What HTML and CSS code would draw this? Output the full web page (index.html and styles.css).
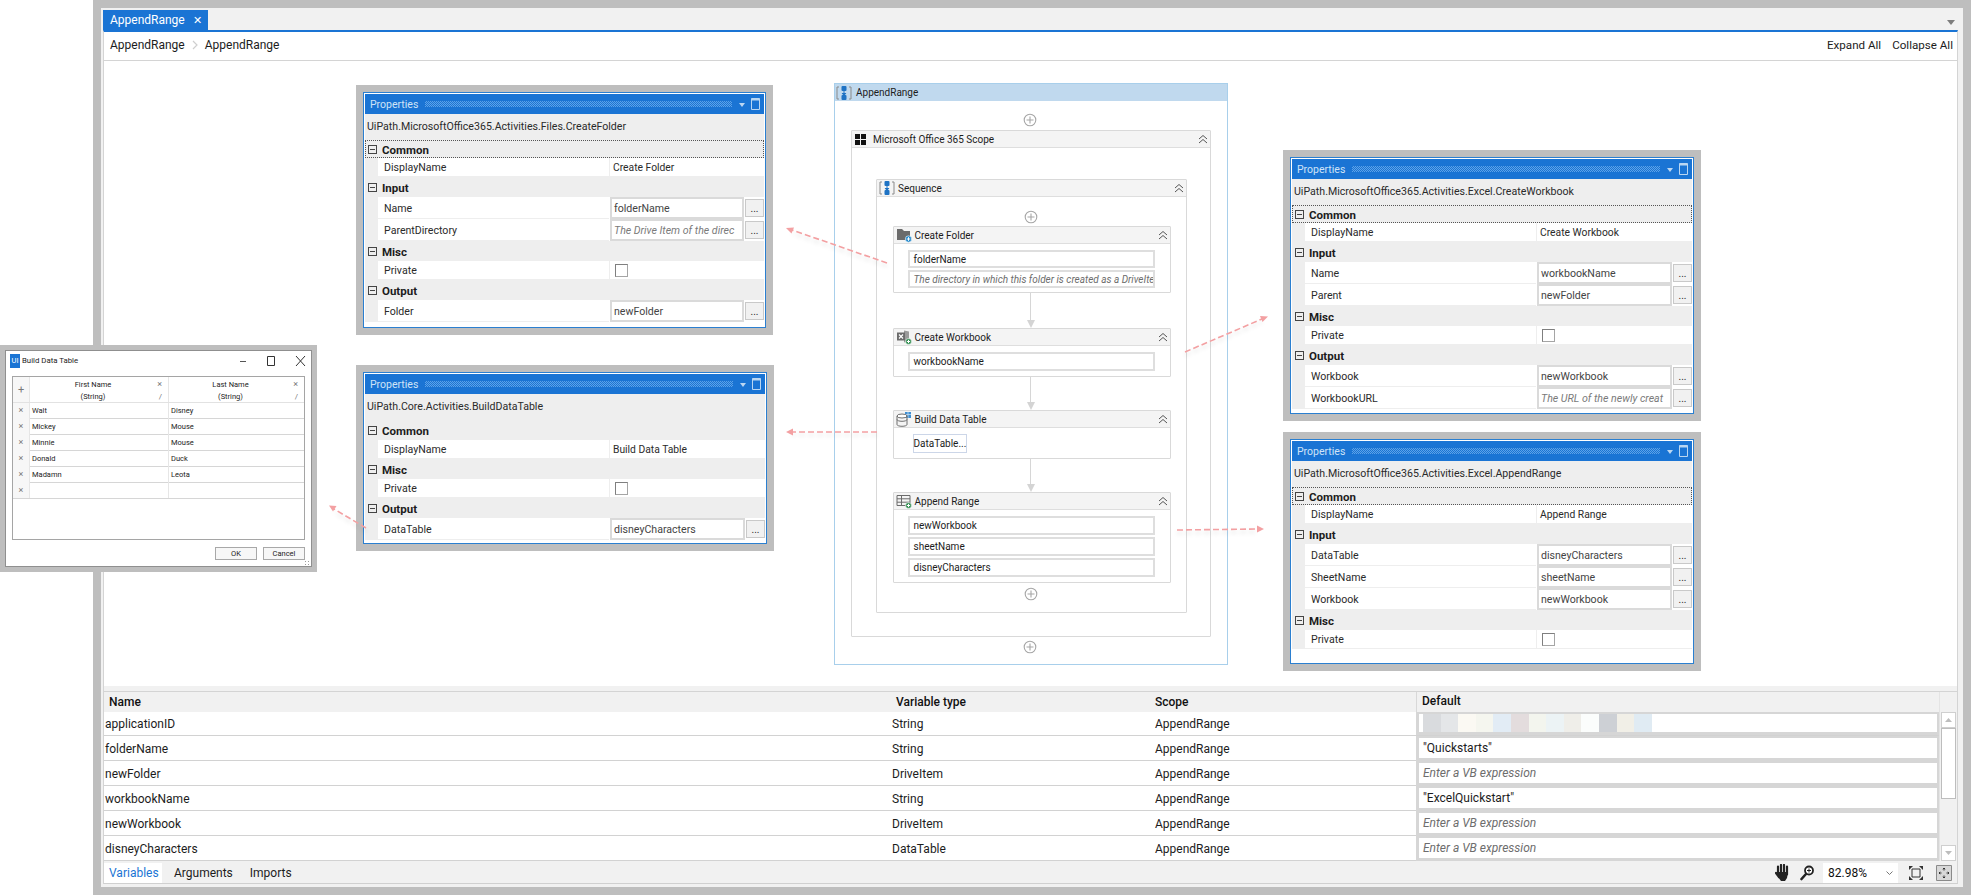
FILE: index.html
```html
<!DOCTYPE html>
<html lang="en">
<head>
<meta charset="utf-8">
<title>AppendRange</title>
<link rel="stylesheet" href="styles.css">
</head>
<body>
<svg class="defs" width="0" height="0" aria-hidden="true">
  <symbol id="i-seq" viewBox="0 0 16 16">
    <path d="M3 2H1v12h2M13 2h2v12h-2" fill="none" stroke="#8a8a8a"/>
    <rect x="5.500" y="1" width="5" height="5" rx="1" fill="#1f73c4"/>
    <rect x="5.500" y="10" width="5" height="5" rx="1" fill="#1f73c4"/>
    <path d="M8 5v5M6 8l2 2.400L10 8" fill="#1f73c4" stroke="#1f73c4"/>
  </symbol>
  <symbol id="i-office" viewBox="0 0 11 11">
    <path d="M0 0h5v5H0zM6 0h5v5H6zM0 6h5v5H0zM6 6h5v5H6z" fill="#111"/>
  </symbol>
  <symbol id="i-folder" viewBox="0 0 16 16">
    <path d="M1 2h5l2 2h6v9H1z" fill="#6b6b6b"/>
    <circle cx="12.500" cy="12" r="3.200" fill="#1f86c9" stroke="#fff" stroke-width=".6"/>
    <path d="M12.500 10.200v3.600M10.700 12h3.600" stroke="#fff"/>
  </symbol>
  <symbol id="i-excel" viewBox="0 0 16 16">
    <path d="M8 1.500l5 1v9l-5 2z" fill="#9a9a9a"/>
    <path d="M1 3.500h8v8H1z" fill="#6b6b6b"/>
    <path d="M3 5.500l4 4M7 5.500l-4 4" stroke="#fff" stroke-width="1.200"/>
    <circle cx="12.500" cy="12.500" r="3" fill="#2e8b4e" stroke="#fff" stroke-width=".6"/>
    <path d="M12.500 10.800v3.400M10.800 12.500h3.400" stroke="#fff"/>
  </symbol>
  <symbol id="i-db" viewBox="0 0 16 16">
    <path d="M9 1h6v6H9z" fill="#3f8fd2"/>
    <path d="M12 1v6M9 3.500h6" stroke="#cfe5f6" stroke-width=".7"/>
    <ellipse cx="6" cy="5" rx="5" ry="2" fill="#fff" stroke="#6e6e6e"/>
    <path d="M1 5v8.500c0 1 2.200 1.800 5 1.800s5-.8 5-1.800V5M1 8.500c0 1 2.200 1.800 5 1.800s5-.8 5-1.800" fill="none" stroke="#6e6e6e"/>
  </symbol>
  <symbol id="i-range" viewBox="0 0 16 16">
    <path d="M1 2.500h13v10H1zM1 5.800h13M1 9.200h13M5.500 2.500v10" fill="none" stroke="#6b6b6b"/>
    <circle cx="12.500" cy="12.500" r="3" fill="#2e8b4e" stroke="#fff" stroke-width=".6"/>
    <path d="M12.500 10.800v3.400M10.800 12.500h3.400" stroke="#fff"/>
  </symbol>
  <symbol id="i-chev" viewBox="0 0 10 10">
    <path d="M1 5l4-3.500L9 5M1 9l4-3.500L9 9" fill="none" stroke="#555" stroke-width="1"/>
  </symbol>
  <symbol id="i-plus" viewBox="0 0 14 14">
    <circle cx="7" cy="7" r="5.800" fill="#fff" stroke="#a6a6a6" stroke-width="1.100"/>
    <path d="M7 3.500v7M3.500 7h7" stroke="#a6a6a6" stroke-width="1.100"/>
  </symbol>
  <symbol id="i-win" viewBox="0 0 9 12">
    <path d="M.5.500h8v11h-8z" fill="none" stroke="#b9d6f2"/>
    <path d="M.5 1.500h8" stroke="#b9d6f2" stroke-width="2"/>
  </symbol>
</svg>

<div class="page">
  <div class="frame">
    <div class="app">
      <div class="tabstrip">
        <div class="tab"><span>AppendRange</span><span class="tab-x">✕</span></div>
        <span class="strip-caret"></span>
      </div>
      <div class="main">
        <div class="crumbs">
          <span>AppendRange</span>
          <svg class="crumb-sep" width="6" height="10" viewBox="0 0 6 10"><path d="M1 1l4 4-4 4" fill="none" stroke="#cfcfcf" stroke-width="1.200"/></svg>
          <span>AppendRange</span>
          <span class="crumb-actions"><span>Expand All</span><span>Collapse All</span></span>
        </div>
        <div class="canvas"></div>
        <div class="split"></div>
        <div class="vars">
          <div class="vars-table">
            <div class="vrow vhead"><span class="vname">Name</span><span>Variable type</span><span>Scope</span><span class="vdefault-head">Default</span></div>
            <div class="vrow vfirst"><span>applicationID</span><span>String</span><span>AppendRange</span>
              <div class="vcell"><div class="vinput"><div class="redact"><i></i><i></i><i></i><i></i><i></i><i></i><i></i><i></i><i></i><i></i><i></i><i></i><i></i></div></div></div></div>
            <div class="vrow"><span>folderName</span><span>String</span><span>AppendRange</span>
              <div class="vcell"><div class="vinput">"Quickstarts"</div></div></div>
            <div class="vrow"><span>newFolder</span><span>DriveItem</span><span>AppendRange</span>
              <div class="vcell"><div class="vinput ph">Enter a VB expression</div></div></div>
            <div class="vrow"><span>workbookName</span><span>String</span><span>AppendRange</span>
              <div class="vcell"><div class="vinput">"ExcelQuickstart"</div></div></div>
            <div class="vrow"><span>newWorkbook</span><span>DriveItem</span><span>AppendRange</span>
              <div class="vcell"><div class="vinput ph">Enter a VB expression</div></div></div>
            <div class="vrow"><span>disneyCharacters</span><span>DataTable</span><span>AppendRange</span>
              <div class="vcell"><div class="vinput ph">Enter a VB expression</div></div></div>
          </div>
          <div class="vscroll">
            <div class="sb-btn"><svg width="7" height="4" viewBox="0 0 7 4"><path d="M0 4l3.500-4L7 4z" fill="#bdbdbd"/></svg></div>
            <div class="sb-thumb"></div>
            <div class="sb-track"></div>
            <div class="sb-btn"><svg width="7" height="4" viewBox="0 0 7 4"><path d="M0 0l3.500 4L7 0z" fill="#bdbdbd"/></svg></div>
          </div>
        </div>
        <div class="bottombar">
          <span class="btab active">Variables</span><span class="btab">Arguments</span><span class="btab">Imports</span>
          <div class="zoomtools">
            <svg class="z-hand" width="16" height="18" viewBox="0 0 16 18"><path d="M3 2.500v7M6 1v8M9 1v8M12 2.500v8M1 9l3 4" fill="none" stroke="#222" stroke-width="2.200" stroke-linecap="round"/><path d="M3 8h10l-1 6-2 3H6l-3-4z" fill="#222"/></svg>
            <svg class="z-glass" width="14" height="16" viewBox="0 0 14 16"><circle cx="9" cy="5.500" r="4" fill="#fff" stroke="#222" stroke-width="1.800"/><path d="M6 9l-4.500 5" stroke="#222" stroke-width="2.600" stroke-linecap="round"/><path d="M9 3.500v4M7 5.500h4" stroke="#222"/></svg>
            <div class="z-box"><span>82.98%</span><svg width="7" height="4" viewBox="0 0 7 4"><path d="M.5.500l3 3 3-3" fill="none" stroke="#777"/></svg></div>
            <svg class="z-fit" width="14" height="14" viewBox="0 0 14 14"><path d="M3 3h8v8H3z" fill="none" stroke="#333"/><path d="M0 0h4L0 4zM14 0h-4l4 4zM0 14h4l-4-4zM14 14h-4l4-4z" fill="#333"/></svg>
            <svg class="z-reset" width="16" height="16" viewBox="0 0 16 16"><path d="M.5.500h15v15H.5z" fill="#d8d8d8" stroke="#8a8a8a"/><path d="M8 3v2.500M6.800 4.200L8 3l1.200 1.200M8 13v-2.500M6.800 11.800L8 13l1.200-1.200M3 8h2.500M4.200 6.800L3 8l1.200 1.200M13 8h-2.500M11.800 6.800L13 8l-1.200 1.200" fill="none" stroke="#333"/></svg>
          </div>
        </div>
      </div>
    </div>
  </div>

  <div class="diagram">
    <div class="root-head"><svg class="ico16"><use href="#i-seq"/></svg><span>AppendRange</span></div>
    <div class="root-body">
      <svg class="plus plus-root"><use href="#i-plus"/></svg>
      <div class="box scope">
        <div class="head"><svg class="ico-office"><use href="#i-office"/></svg><span>Microsoft Office 365 Scope</span><svg class="chev"><use href="#i-chev"/></svg></div>
        <div class="scope-body">
          <div class="box seq">
            <div class="head"><svg class="ico16"><use href="#i-seq"/></svg><span>Sequence</span><svg class="chev"><use href="#i-chev"/></svg></div>
            <div class="seq-body">
              <svg class="plus plus-seq"><use href="#i-plus"/></svg>
              <div class="box card">
                <div class="head"><svg class="ico16"><use href="#i-folder"/></svg><span>Create Folder</span><svg class="chev"><use href="#i-chev"/></svg></div>
                <div class="card-body tight"><div class="finput short">folderName</div><div class="finput short ph">The directory in which this folder is created as a DriveIte</div></div>
              </div>
              <div class="conn conn-a"></div>
              <div class="box card">
                <div class="head"><svg class="ico16"><use href="#i-excel"/></svg><span>Create Workbook</span><svg class="chev"><use href="#i-chev"/></svg></div>
                <div class="card-body"><div class="finput">workbookName</div></div>
              </div>
              <div class="conn"></div>
              <div class="box card">
                <div class="head"><svg class="ico16"><use href="#i-db"/></svg><span>Build Data Table</span><svg class="chev"><use href="#i-chev"/></svg></div>
                <div class="card-body"><div class="dt-btn">DataTable...</div></div>
              </div>
              <div class="conn"></div>
              <div class="box card">
                <div class="head"><svg class="ico16"><use href="#i-range"/></svg><span>Append Range</span><svg class="chev"><use href="#i-chev"/></svg></div>
                <div class="card-body"><div class="finput">newWorkbook</div><div class="finput">sheetName</div><div class="finput">disneyCharacters</div></div>
              </div>
              <svg class="plus plus-end"><use href="#i-plus"/></svg>
            </div>
          </div>
        </div>
      </div>
      <svg class="plus plus-tail"><use href="#i-plus"/></svg>
    </div>
  </div>

  <section class="panel panel-a">
    <div class="p-head"><span>Properties</span><i class="grip"></i><i class="p-caret"></i><svg class="p-win"><use href="#i-win"/></svg></div>
    <div class="p-class">UiPath.MicrosoftOffice365.Activities.Files.CreateFolder</div>
    <div class="cat first focus"><i class="minus"></i>Common</div>
    <div class="prop plain"><span class="lab">DisplayName</span><span class="val">Create Folder</span></div>
    <div class="cat"><i class="minus"></i>Input</div>
    <div class="prop"><span class="lab">Name</span><div class="val-edit"><span class="tb">folderName</span><span class="dots">...</span></div></div>
    <div class="prop"><span class="lab">ParentDirectory</span><div class="val-edit"><span class="tb ph">The Drive Item of the direc</span><span class="dots">...</span></div></div>
    <div class="cat"><i class="minus"></i>Misc</div>
    <div class="prop plain"><span class="lab">Private</span><div class="val-check"><i class="check"></i></div></div>
    <div class="cat"><i class="minus"></i>Output</div>
    <div class="prop"><span class="lab">Folder</span><div class="val-edit"><span class="tb">newFolder</span><span class="dots">...</span></div></div>
  </section>

  <section class="panel panel-b">
    <div class="p-head"><span>Properties</span><i class="grip"></i><i class="p-caret"></i><svg class="p-win"><use href="#i-win"/></svg></div>
    <div class="p-class">UiPath.Core.Activities.BuildDataTable</div>
    <div class="cat"><i class="minus"></i>Common</div>
    <div class="prop plain"><span class="lab">DisplayName</span><span class="val">Build Data Table</span></div>
    <div class="cat"><i class="minus"></i>Misc</div>
    <div class="prop plain"><span class="lab">Private</span><div class="val-check"><i class="check"></i></div></div>
    <div class="cat"><i class="minus"></i>Output</div>
    <div class="prop"><span class="lab">DataTable</span><div class="val-edit"><span class="tb">disneyCharacters</span><span class="dots">...</span></div></div>
  </section>

  <section class="panel panel-c">
    <div class="p-head"><span>Properties</span><i class="grip"></i><i class="p-caret"></i><svg class="p-win"><use href="#i-win"/></svg></div>
    <div class="p-class">UiPath.MicrosoftOffice365.Activities.Excel.CreateWorkbook</div>
    <div class="cat first focus"><i class="minus"></i>Common</div>
    <div class="prop plain"><span class="lab">DisplayName</span><span class="val">Create Workbook</span></div>
    <div class="cat"><i class="minus"></i>Input</div>
    <div class="prop"><span class="lab">Name</span><div class="val-edit"><span class="tb">workbookName</span><span class="dots">...</span></div></div>
    <div class="prop"><span class="lab">Parent</span><div class="val-edit"><span class="tb">newFolder</span><span class="dots">...</span></div></div>
    <div class="cat"><i class="minus"></i>Misc</div>
    <div class="prop plain"><span class="lab">Private</span><div class="val-check"><i class="check"></i></div></div>
    <div class="cat"><i class="minus"></i>Output</div>
    <div class="prop"><span class="lab">Workbook</span><div class="val-edit"><span class="tb">newWorkbook</span><span class="dots">...</span></div></div>
    <div class="prop"><span class="lab">WorkbookURL</span><div class="val-edit"><span class="tb ph">The URL of the newly creat</span><span class="dots">...</span></div></div>
  </section>

  <section class="panel panel-d">
    <div class="p-head"><span>Properties</span><i class="grip"></i><i class="p-caret"></i><svg class="p-win"><use href="#i-win"/></svg></div>
    <div class="p-class">UiPath.MicrosoftOffice365.Activities.Excel.AppendRange</div>
    <div class="cat first focus"><i class="minus"></i>Common</div>
    <div class="prop plain"><span class="lab">DisplayName</span><span class="val">Append Range</span></div>
    <div class="cat"><i class="minus"></i>Input</div>
    <div class="prop"><span class="lab">DataTable</span><div class="val-edit"><span class="tb">disneyCharacters</span><span class="dots">...</span></div></div>
    <div class="prop"><span class="lab">SheetName</span><div class="val-edit"><span class="tb">sheetName</span><span class="dots">...</span></div></div>
    <div class="prop"><span class="lab">Workbook</span><div class="val-edit"><span class="tb">newWorkbook</span><span class="dots">...</span></div></div>
    <div class="cat"><i class="minus"></i>Misc</div>
    <div class="prop plain"><span class="lab">Private</span><div class="val-check"><i class="check"></i></div></div>
  </section>

  <section class="dialog">
    <div class="d-title">
      <span class="d-logo">UI</span><span class="d-name">Build Data Table</span>
      <svg class="d-btns" width="70" height="12" viewBox="0 0 70 12"><path d="M2 6.500h6" stroke="#555"/><path d="M29.500 1.500h7v9h-7z" fill="none" stroke="#333"/><path d="M58 1l9 10M67 1l-9 10" stroke="#333"/></svg>
    </div>
    <div class="d-grid">
      <div class="d-row d-headrow">
        <span class="d-add">+</span>
        <div class="d-col"><span>First Name</span><span>(String)</span><b class="d-x">×</b><b class="d-pen">/</b></div>
        <div class="d-col"><span>Last Name</span><span>(String)</span><b class="d-x">×</b><b class="d-pen">/</b></div>
      </div>
      <div class="d-row"><span class="d-del">×</span><span class="d-c">Walt</span><span class="d-c">Disney</span></div>
      <div class="d-row"><span class="d-del">×</span><span class="d-c">Mickey</span><span class="d-c">Mouse</span></div>
      <div class="d-row"><span class="d-del">×</span><span class="d-c">Minnie</span><span class="d-c">Mouse</span></div>
      <div class="d-row"><span class="d-del">×</span><span class="d-c">Donald</span><span class="d-c">Duck</span></div>
      <div class="d-row"><span class="d-del">×</span><span class="d-c">Madamn</span><span class="d-c">Leota</span></div>
      <div class="d-row"><span class="d-del">×</span><span class="d-c"></span><span class="d-c"></span></div>
    </div>
    <div class="d-actions"><span class="d-btn">OK</span><span class="d-btn">Cancel</span></div>
  </section>

  <svg class="arrows" width="1971" height="895" viewBox="0 0 1971 895">
    <g class="arrow-lines">
      <path d="M887 263L792 230"/>
      <path d="M1185 352L1262 319"/>
      <path d="M877 432H792"/>
      <path d="M1177 530L1258 529"/>
      <path d="M366 528L334 509"/>
    </g>
    <g class="arrow-heads">
      <path d="M786 228l8-.5-2.500 6z"/>
      <path d="M1268 316.500l-8-.5 2.500 6z"/>
      <path d="M786 432l7-3.500v7z"/>
      <path d="M1264 529l-7-3.500v7z"/>
      <path d="M329 505.500l7.500.5-3.500 5.500z"/>
    </g>
  </svg>
</div>
</body>
</html>
```

FILE: styles.css
```css
* { box-sizing: border-box; }
html, body { margin: 0; padding: 0; background: #fff; }
body { font-family: Roboto, "Noto Sans", "Liberation Sans", sans-serif; font-size: 12px; color: #1c1c1c; overflow: hidden; }
.defs { position: absolute; }
i, b { font-style: normal; font-weight: normal; }

.page { position: relative; width: 1971px; height: 895px; overflow: hidden; }
.frame { margin-left: 93px; height: 895px; background: #bebebe; padding: 8px; }
.app { height: 879px; background: #f1f1f1; padding: 0 5px 3px 2px; display: flex; flex-direction: column; }

.tabstrip { height: 22px; flex: none; display: flex; align-items: flex-end; justify-content: space-between; }
.tab { width: 105px; height: 20px; background: #1a74d4; color: #fff; display: flex; align-items: center; justify-content: space-between; padding: 0 6px 0 7px; font-size: 12px; }
.tab-x { font-size: 11px; }
.strip-caret { width: 0; height: 0; border-left: 4px solid transparent; border-right: 4px solid transparent; border-top: 5px solid #7d7d7d; margin: 0 3px 5px 0; }

.main { flex: 1; min-height: 0; display: flex; flex-direction: column; border-top: 2px solid #1a74d4; border-left: 1px solid #d4d4d4; border-right: 1px solid #d4d4d4; border-bottom: 1px solid #d0d0d0; background: #fff; }
.crumbs { height: 29px; flex: none; display: flex; align-items: center; gap: 7px; padding: 0 4px 3px 6px; border-bottom: 1px solid #d4d4d4; }
.crumb-sep { margin: 0; }
.crumb-actions { margin-left: auto; display: flex; gap: 11px; font-size: 11.600px; }
.canvas { flex: 1; min-height: 0; background: #fff; }
.split { height: 5px; flex: none; background: #f1f1f1; }

.vars { flex: none; display: flex; height: 170px; border-top: 1px solid #d4d4d4; }
.vars-table { flex: 1; min-width: 0; }
.vrow { display: grid; grid-template-columns: 787px 263px 261px 1fr; height: 25px; align-items: center; border-bottom: 1px solid #d2d2d2; padding-left: 1px; }
.vfirst { height: 24px; }
.vhead { grid-template-columns: 791px 259px 261px 1fr; height: 20px; background: #f1f1f1; border-bottom: 0; font-weight: 500; color: #111; margin-right: -18px; padding-right: 18px; padding-bottom: 1px; }
.vname { padding-left: 4px; }
.vdefault-head { padding-left: 5px; border-left: 1px solid #d8d8d8; height: 20px; line-height: 19px; }
.vcell { align-self: stretch; background: #d6d6d6; padding: 2px 2px 3px 3px; }
.vinput { height: 100%; background: #fff; padding-left: 4px; line-height: 20px; }
.vinput.ph { font-style: italic; color: #6d6d6d; }
.redact { display: flex; width: 229px; height: 18px; }
.redact i { flex: 1; }
.redact i:nth-child(1) { background: #d9dbde; }
.redact i:nth-child(2) { background: #e4e6e8; }
.redact i:nth-child(3) { background: #fbf9f3; }
.redact i:nth-child(4) { background: #f5f6ef; }
.redact i:nth-child(5) { background: #e2ecf5; }
.redact i:nth-child(6) { background: #e3dcdd; }
.redact i:nth-child(7) { background: #f3f5ee; }
.redact i:nth-child(8) { background: #ecf3f5; }
.redact i:nth-child(9) { background: #efeee9; }
.redact i:nth-child(10) { background: #fbfdfc; }
.redact i:nth-child(11) { background: #cdd0d5; }
.redact i:nth-child(12) { background: #f1efe7; }
.redact i:nth-child(13) { background: #e0ebf3; }

.vscroll { width: 18px; flex: none; padding-top: 20px; background: #f1f1f1; display: flex; flex-direction: column; border-left: 1px solid #e4e4e4; position: relative; }
.sb-btn { height: 16px; margin: 0 1px; background: #fff; border: 1px solid #cfcfcf; display: flex; align-items: center; justify-content: center; flex: none; }
.sb-thumb { height: 71px; margin: 0 1px; background: #fff; border: 1px solid #bdbdbd; flex: none; }
.sb-track { flex: 1; }

.bottombar { flex: none; height: 22px; display: flex; align-items: center; background: #f1f1f1; padding-top: 2px; }
.btab { height: 20px; line-height: 21px; padding: 0 5px; margin-right: 7px; }
.btab.active { width: 58px; background: #fff; color: #1a74d4; margin-right: 7px; }
.zoomtools { margin-left: auto; display: flex; align-items: center; padding-right: 5px; }
.z-hand { margin-right: 9px; }
.z-glass { margin-right: 9px; }
.z-box { width: 75px; height: 20px; background: #fff; display: flex; align-items: center; justify-content: space-between; padding: 0 5px; margin-right: 11px; color: #111; }
.z-fit { margin-right: 13px; }

/* Workflow diagram: a free canvas inside the designer */
.diagram { position: absolute; left: 834px; top: 83px; width: 394px; height: 582px; border: 1px solid #a8cfeb; background: #fff; font-size: 10px; display: flex; flex-direction: column; }
.root-head { height: 18px; background: #c0d9ee; display: flex; align-items: center; gap: 4px; padding-left: 1px; flex: none; margin: -1px -1px 0; border: 1px solid #a8cfeb; border-bottom: 0; }
.root-body { flex: 1; display: flex; flex-direction: column; align-items: center; }
.ico16 { width: 16px; height: 16px; flex: none; }
.plus { width: 14px; height: 14px; flex: none; display: block; margin-right: 2px; }
.plus-root { margin-top: 12px; margin-bottom: 3px; }
.box { border: 1px solid #d9d9d9; background: #fff; border-radius: 1px; }
.head { height: 17px; background: #f4f4f4; border-bottom: 1px solid #dedede; display: flex; align-items: center; gap: 3px; padding: 0 3px 0 2px; }
.head > span { flex: 1; }
.chev { width: 10px; height: 10px; margin-right: -1px; flex: none; }
.ico-office { width: 11px; height: 11px; margin: 0 4px 0 1px; flex: none; }
.scope { width: 360px; height: 507px; }
.scope-body { padding: 31px 23px 0 24px; }
.seq { width: 311px; height: 434px; }
.seq-body { display: flex; flex-direction: column; align-items: center; }
.plus-seq { margin-top: 13px; margin-bottom: 2px; }
.card { width: 278px; }
.card-body { padding: 6px 15px 5px 14px; display: flex; flex-direction: column; gap: 2px; }
.card-body.tight { gap: 2px; padding-bottom: 4px; }
.finput { height: 19px; border: 2px solid #dedede; padding-left: 4px; line-height: 16px; color: #1c1c1c; white-space: nowrap; overflow: hidden; background: #fff; }
.finput.short { height: 18px; line-height: 15px; }
.finput.ph { font-style: italic; color: #6d6d6d; }
.dt-btn { width: 54px; height: 19px; margin-left: 5px; border: 1px solid #ccd6e8; line-height: 17px; text-align: center; }
.conn { width: 8px; height: 33px; position: relative; flex: none; margin-right: 2px; }
.conn-a { height: 35px; }
.conn::before { content: ""; position: absolute; left: 3.500px; top: 0; bottom: 6px; width: 1px; background: #d6d6d6; }
.conn::after { content: ""; position: absolute; left: 0; bottom: 0; border-left: 4px solid transparent; border-right: 4px solid transparent; border-top: 8px solid #d4d4d4; }
.plus-end { margin-top: 4px; }
.plus-tail { margin-top: 3px; }

/* Floating property windows placed over the canvas */
.panel { position: absolute; background: #fff; border: 7px solid #bebebe; outline: 1px solid #2b7fd0; outline-offset: -8px; font-size: 10.600px; padding: 2px; color: #2a2a2a; }
.panel-a { left: 356px; top: 85px; width: 417px; height: 250px; }
.panel-b { left: 356px; top: 365px; width: 418px; height: 186px; }
.panel-c { left: 1283px; top: 150px; width: 418px; height: 271px; }
.panel-d { left: 1283px; top: 432px; width: 418px; height: 239px; }
.p-head { height: 20px; background: #1a74d4; color: #cfe3f7; display: flex; align-items: center; padding: 0 4px 0 5px; font-size: 10.500px; }
.grip { flex: 1; height: 6px; margin: 0 7px; background-image: repeating-conic-gradient(#5ea3e8 0 25%, transparent 0 50%); background-size: 2px 2px; }
.p-caret { width: 0; height: 0; border-left: 3px solid transparent; border-right: 3px solid transparent; border-top: 4px solid #bcd7f2; margin: 2px 6px 0 0; }
.p-win { width: 9px; height: 12px; flex: none; }
.p-class { height: 26px; background: #eeeeee; line-height: 26px; padding-left: 2px; white-space: nowrap; }
.cat { height: 20px; background: #eeeeee; display: flex; align-items: center; padding: 1px 0 0 3px; font-weight: 700; font-size: 11.500px; color: #1c1c1c; }
.cat.first { height: 18px; }
.cat.focus { outline: 1px dotted #555; outline-offset: -1px; }
.minus { width: 9px; height: 9px; border: 1px solid #444; margin-right: 5px; position: relative; flex: none; }
.minus::after { content: ""; position: absolute; left: 1px; right: 1px; top: 3px; height: 1px; background: #444; }
.prop { display: grid; grid-template-columns: 13px 231px 1fr; height: 22px; background: #eeeeee; }
.prop::before { content: ""; }
.prop.plain { height: 19px; }
.lab, .val, .val-check, .val-edit { background: #fff; display: flex; align-items: center; }
.lab { padding: 1px 0 0 6px; border-bottom: 1px solid #eeeeee; }
.val { padding-left: 3px; border-left: 1px solid #eeeeee; border-bottom: 1px solid #eeeeee; font-size: 10.300px; }
.val-check { padding-left: 5px; border-left: 1px solid #eeeeee; border-bottom: 1px solid #eeeeee; }
.check { width: 13px; height: 13px; border: 1px solid #7f7f7f; border-right-color: #a5a5a5; border-bottom-color: #a5a5a5; background: #fff; }
.val-edit { padding-left: 1px; gap: 1px; align-items: stretch; }
.tb { flex: 1; min-width: 0; border: 2px solid #dadada; padding: 0 2px; display: flex; align-items: center; white-space: nowrap; overflow: hidden; color: #444; }
.tb.ph { font-style: italic; color: #7a7a7a; }
.dots { width: 19px; height: 18px; margin-top: 2px; border: 1px solid #c9c9c9; background: #f1f1f1; text-align: center; font-size: 10px; line-height: 18px; }

/* Dialog overlapping the designer's left edge */
.dialog { position: absolute; left: 0; top: 345px; width: 317px; height: 227px; background: #fff; border: 5px solid #bebebe; border-right-width: 6px; display: flex; flex-direction: column; font-size: 7.500px; padding: 0 6px 0 7px; outline: 1px solid #8f8f8f; outline-offset: -6px; }
.dialog::after { content: ""; position: absolute; right: 0; bottom: 0; width: 7px; height: 7px; background-image: radial-gradient(circle, #9a9a9a .7px, transparent .8px); background-size: 3px 3px; }
.d-title { height: 26px; flex: none; display: flex; align-items: center; gap: 2px; margin-left: -2px; padding-bottom: 5px; }
.d-logo { width: 10px; height: 14px; background: #1a74d4; color: #fff; text-align: center; line-height: 14px; font-size: 7.500px; }
.d-name { flex: 1; font-size: 7.800px; }
.d-btns { margin-right: -3px; }
.d-grid { height: 164px; flex: none; border: 1px solid #a5a5a5; background: #fff; }
.d-row { display: grid; grid-template-columns: 16px 139px 1fr; height: 16px; border-bottom: 1px solid #d6d6d6; align-items: center; }
.d-headrow { height: 26px; background: #fff; border-bottom: 1px solid #e2e2e2; align-items: stretch; }
.d-add { background: #f7f7f7; display: flex; align-items: center; justify-content: center; font-size: 11px; color: #777; }
.d-col { position: relative; display: flex; flex-direction: column; align-items: center; padding: 3px 12px 0 0; gap: 3px; border-left: 1px solid #e6e6e6; line-height: 9px; }
.d-x { position: absolute; right: 6px; top: 3px; color: #777; font-size: 9px; }
.d-pen { position: absolute; right: 6px; top: 15px; color: #777; font-size: 8px; }
.d-del { background: #f7f7f7; height: 100%; text-align: center; color: #777; line-height: 14px; font-size: 9px; }
.d-c { height: 100%; padding-left: 2px; line-height: 16px; border-left: 1px solid #e6e6e6; }
.d-actions { display: flex; justify-content: flex-end; gap: 6px; margin-top: 7px; }
.d-btn { width: 42px; height: 13px; border: 1px solid #a8a8a8; background: #f7f7f7; text-align: center; line-height: 11px; }

.arrows { position: absolute; left: 0; top: 0; pointer-events: none; }
.arrow-lines path { fill: none; stroke: #f3a0a2; stroke-width: 1.600; stroke-dasharray: 6 3; filter: drop-shadow(0 3px 2px rgba(0,0,0,.12)); }
.arrow-heads path { fill: #f3a0a2; }
```
